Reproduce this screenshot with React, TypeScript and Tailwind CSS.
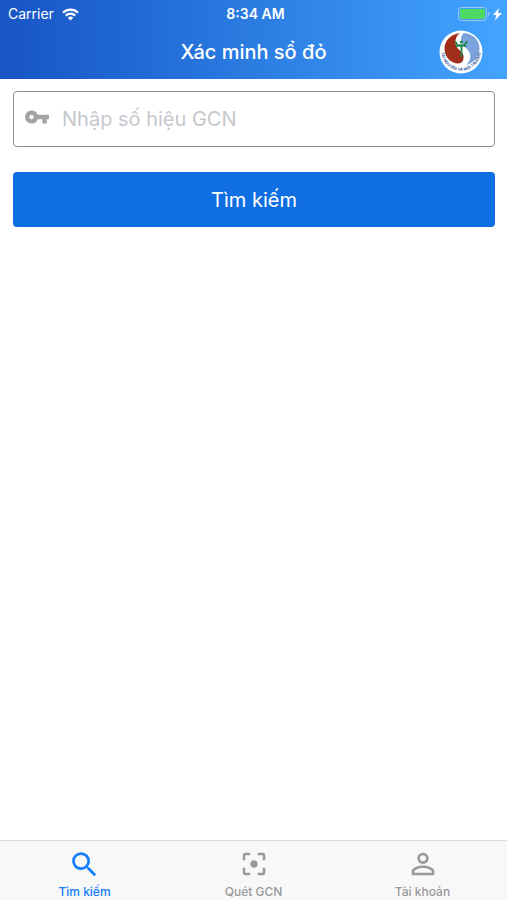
import { useState } from "react";
import { MdFilterCenterFocus, MdPersonOutline, MdSearch, MdVpnKey } from "react-icons/md";

function StatusBar() {
  return (
    <div className="grid h-7 grid-cols-3 items-center pr-1 pl-2 text-[14px] leading-4">
      <div className="flex items-center gap-2">
        <span>Carrier</span>
        <svg width="17" height="13" viewBox="0 0 17 13" fill="none" stroke="currentColor" strokeWidth="2.2" aria-hidden="true">
          <path d="M1 4.6C5.2.5 11.8.5 16 4.6" />
          <path d="M3.8 7.6c2.7-2.6 6.7-2.6 9.4 0" />
          <path d="M8.500 12.400 5.800 9.700c1.600-1.500 3.800-1.500 5.400 0z" fill="currentColor" stroke="none" />
        </svg>
      </div>
      <time className="text-center font-semibold">8:34 AM</time>
      <svg className="justify-self-end" width="45" height="14" viewBox="0 0 45 14" aria-hidden="true">
        <rect x=".5" y=".5" width="28" height="13" rx="3" fill="none" stroke="#9cc9fb" />
        <rect x="2" y="2" width="25" height="10" rx="1.5" fill="#4cd964" />
        <path d="M30 5v4c2-.7 2-3.300 0-4z" fill="#9cc9fb" />
        <path d="M41 1 35 8h3.400l-1.600 5.500L44 6h-4z" fill="#fff" />
      </svg>
    </div>
  );
}

function Emblem() {
  return (
    <svg className="size-11" viewBox="0 0 44 44" role="img" aria-label="Logo">
      <defs>
        <path id="rim" d="M2.200 21a19.800 19.800 0 0 0 39.600 0" />
      </defs>
      <circle cx="22" cy="22" r="21.500" fill="#fff" />
      <path d="M21 3C12 4 5.500 10.500 5.500 18.500 5.500 27 12 33.500 19 33.500c4 0 6-3 5.500-7.500C24 21 17.500 20 16.500 13.500 16 9 17.500 5.500 21 3z" fill="#a12d1b" />
      <path d="M25 3c9 .5 15.500 7 15.500 15.500 0 8-5.500 14.500-13.500 16.500 4-3.500 5.500-8 3.500-12.500C28.500 18 22.500 15.500 22 9.500c-.1-2.500 1-5 3-6.500z" fill="#7ba3dd" />
      <path d="M22.500 27V16M16.500 11.500c1 3.500 3 4.500 6 4.500 3-.5 4.500-2 5.500-5M17 16.500c3-1.500 7-1.500 10 0" stroke="#188544" strokeWidth="1.800" fill="none" />
      <circle cx="22.300" cy="12" r="1.500" fill="#188544" />
      <text fontSize="4" fontWeight="700" fill="#4a69a8">
        <textPath href="#rim" startOffset="50%" textAnchor="middle">TÀI NGUYÊN VÀ MÔI TRƯỜNG</textPath>
      </text>
    </svg>
  );
}

const tabs = [
  { label: "Tìm kiếm", Icon: MdSearch, size: 33 },
  { label: "Quét GCN", Icon: MdFilterCenterFocus, size: 30 },
  { label: "Tài khoản", Icon: MdPersonOutline, size: 34 },
];

export default function App() {
  const [active, setActive] = useState(0);
  return (
    <div className="flex h-screen flex-col overflow-hidden bg-white font-['Inter','Noto_Sans',sans-serif]">
      <header className="bg-linear-to-r from-[#1854c4] to-[#43a4ff] text-white">
        <StatusBar />
        <div className="grid h-[51px] grid-cols-[1fr_auto_1fr] items-center pr-6 pb-[3px]">
          <span />
          <h1 className="pl-6 text-[20px] leading-6 font-medium">Xác minh sổ đỏ</h1>
          <div className="justify-self-end">
            <Emblem />
          </div>
        </div>
      </header>
      <main className="flex-1 px-3 pt-3 pl-[13px]">
        <form className="flex flex-col gap-[25px]" onSubmit={(e) => e.preventDefault()}>
          <label className="flex h-14 items-center gap-3 rounded border border-[#8c8c8c] px-[10px] text-[#a3a3a3]">
            <MdVpnKey className="mb-1" size={26} aria-hidden="true" />
            <input
              aria-label="Nhập số hiệu GCN"
              placeholder="Nhập số hiệu GCN"
              className="min-w-0 flex-1 bg-transparent text-[20px] leading-6 text-black outline-none placeholder:text-[#c7c7cd]"
            />
          </label>
          <button type="submit" className="h-[55px] rounded bg-[#0f6fe2] text-[20px] leading-6 text-white">
            Tìm kiếm
          </button>
        </form>
      </main>
      <nav className="grid h-[60px] grid-cols-3 border-t border-[#dcdcdc] bg-[#f8f8f8]">
        {tabs.map(({ label, Icon, size }, i) => (
          <button
            key={label}
            type="button"
            onClick={() => setActive(i)}
            className={`flex flex-col items-center justify-end gap-[3px] text-[12px] leading-4 font-medium ${i === active ? "text-[#147efb]" : "text-[#999999]"}`}
          >
            <span className="flex h-[34px] items-center">
              <Icon size={size} aria-hidden="true" />
            </span>
            {label}
          </button>
        ))}
      </nav>
    </div>
  );
}
